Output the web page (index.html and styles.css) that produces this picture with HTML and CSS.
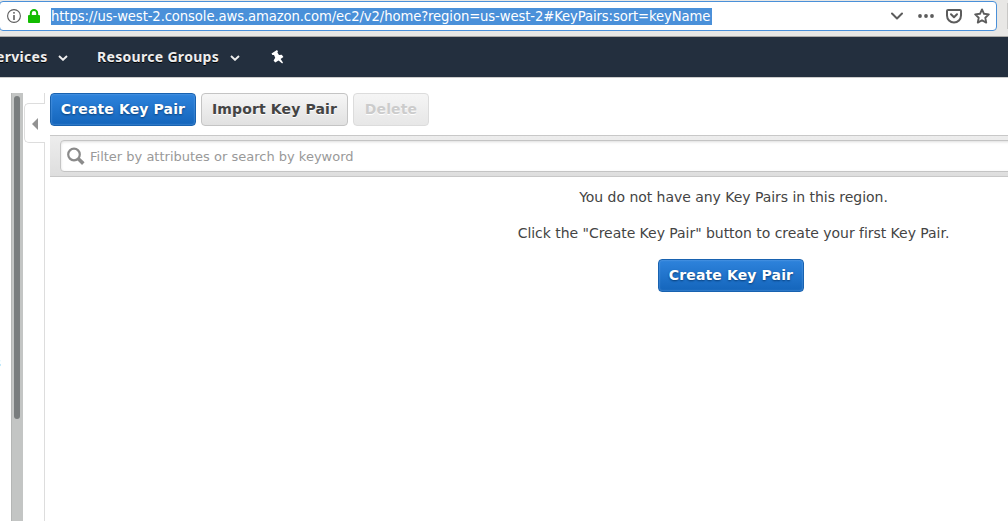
FILE: index.html
```
<!DOCTYPE html>
<html lang="en">
<head>
<meta charset="utf-8">
<title>EC2 Key Pairs</title>
<link rel="stylesheet" href="styles.css">
</head>
<body>
<header class="browser">
  <div class="address">
    <svg class="info" width="14" height="14" viewBox="0 0 14 14"><circle cx="7" cy="7" r="6.4" fill="none" stroke="#5c5c5c" stroke-width="1.1"/><rect x="6.1" y="3" width="1.8" height="1.8" rx=".7" fill="#5c5c5c"/><rect x="6.2" y="6" width="1.6" height="5" rx=".5" fill="#5c5c5c"/></svg>
    <svg class="lock" width="12" height="14" viewBox="0 0 12 14"><path d="M2.8 7V4.2a3.2 3.2 0 0 1 6.4 0V7" fill="none" stroke="#12bc00" stroke-width="2"/><rect x="0" y="6" width="12" height="8" rx="1" fill="#12bc00"/></svg>
    <span class="url">https://us-west-2.console.aws.amazon.com/ec2/v2/home?region=us-west-2#KeyPairs:sort=keyName</span>
    <div class="actions">
      <svg width="12" height="16" viewBox="0 0 12 16"><path d="M1 5.5 6 10.5 11 5.5" fill="none" stroke="#5c5c5c" stroke-width="2" stroke-linecap="round" stroke-linejoin="round"/></svg>
      <svg width="16" height="16" viewBox="0 0 16 16" fill="#5c5c5c"><circle cx="2" cy="8" r="1.9"/><circle cx="8" cy="8" r="1.9"/><circle cx="14" cy="8" r="1.9"/></svg>
      <svg width="16" height="16" viewBox="0 0 16 16" fill="none" stroke="#5c5c5c" stroke-width="2" stroke-linecap="round" stroke-linejoin="round"><path d="M2 2h12a1 1 0 0 1 1 1v4.5a7 7 0 0 1-14 0V3a1 1 0 0 1 1-1z"/><path d="M5 6.3 8 9.2l3-2.9"/></svg>
      <svg width="16" height="16" viewBox="0 0 16 16"><path d="M8 1.4 10 5.8l4.8.6-3.5 3.3.9 4.9L8 12.2l-4.2 2.4.9-4.9L1.2 6.4 6 5.8z" fill="none" stroke="#5c5c5c" stroke-width="1.9" stroke-linejoin="round"/></svg>
    </div>
  </div>
  <div class="search-edge"></div>
</header>
<nav class="topnav">
  <span class="label services">Services</span>
  <svg class="caret" width="10" height="6" viewBox="0 0 10 6"><path d="M1 1 5 4.8 9 1" fill="none" stroke="#eee" stroke-width="1.9"/></svg>
  <span class="label groups">Resource Groups</span>
  <svg class="caret" width="10" height="6" viewBox="0 0 10 6"><path d="M1 1 5 4.8 9 1" fill="none" stroke="#eee" stroke-width="1.9"/></svg>
  <svg class="pin" width="13" height="14" viewBox="0 0 13 14"><path d="M.5 3.5 6 .1 7 1.5 6.4 2.6 8 5 10.8 4.8 12.4 7 9.6 9 12 12.6 11.2 13.5 7.6 10.4 4.2 12.6 2.6 10.4 4.2 7.7 3 5.1 1.4 5z" fill="#fff"/></svg>
</nav>
<main class="console">
  <aside class="sidebar"><span class="clipped">s</span></aside>
  <div class="scrollbar"><div class="thumb"></div></div>
  <div class="divider">
    <div class="stub"></div>
    <div class="collapse"><svg width="6" height="12" viewBox="0 0 6 12"><path d="M6 0v12L0 6z" fill="#929292"/></svg></div>
    <div class="line"></div>
  </div>
  <section class="content">
    <div class="toolbar">
      <button class="btn primary">Create Key Pair</button>
      <button class="btn import">Import Key Pair</button>
      <button class="btn disabled">Delete</button>
    </div>
    <div class="filterbar">
      <div class="filter">
        <svg width="18" height="18" viewBox="0 0 18 18"><circle cx="7" cy="7.5" r="5.8" fill="none" stroke="#8b8b8b" stroke-width="2.2"/><path d="m11.3 11.8 5 4.8" stroke="#8b8b8b" stroke-width="3.6"/></svg>
        <span>Filter by attributes or search by keyword</span>
      </div>
    </div>
    <div class="empty">
      <p>You do not have any Key Pairs in this region.</p>
      <p>Click the "Create Key Pair" button to create your first Key Pair.</p>
      <button class="btn primary">Create Key Pair</button>
    </div>
  </section>
</main>
</body>
</html>
```
FILE: styles.css
```
* { box-sizing: border-box; }
body { margin: 0; width: 1008px; height: 521px; overflow: hidden; background: #fff; font-family: "DejaVu Sans", sans-serif; }
svg { display: block; flex: none; }
.browser { display: flex; height: 37px; padding-top: 1px; background: #e8e7e5; border-bottom: 1px solid #aaa9a7; }
.address { display: flex; align-items: center; width: 998px; height: 30px; margin-left: -1px; padding: 0 6px 0 7px; flex: none; background: #fff; border: 1px solid #4a90d9; border-radius: 4px; }
.info { margin-right: 7px; }
.lock { margin-right: 11px; }
.url { width: 661px; height: 17px; line-height: 16px; font-family: "DejaVu Sans Condensed", "DejaVu Sans", sans-serif; font-stretch: condensed; font-size: 14.67px; letter-spacing: -.1px; color: #fff; background: #4a90d9; white-space: nowrap; }
.actions { display: flex; align-items: center; margin-left: auto; }
.actions svg + svg { margin-left: 12px; }
.actions svg:nth-child(2) { margin-left: 15px; }
.search-edge { width: 2px; height: 26px; margin: 2px 0 0 10px; background: #c8c7c5; }
.topnav { display: flex; align-items: center; height: 40px; background: #232f3e; }
.label { color: #eee; font: bold 14px/20px "Noto Sans", sans-serif; letter-spacing: .31px; white-space: nowrap; text-shadow: 0 1px 0 #000; }
.services { width: 59px; margin-left: -12px; }
.caret { margin: 2px 0 0 11px; }
.groups { width: 122px; margin-left: 29px; }
.pin { margin: 0 0 0 31px; }
.console { display: flex; height: 444px; padding-top: 15px; border-top: 1px solid #ccc; }
.sidebar { width: 11px; flex: none; overflow: hidden; }
.clipped { display: block; margin: 261px 0 0 -6px; font-size: 13px; line-height: 18px; color: #666; }
.scrollbar { width: 12px; flex: none; padding: 3px 3px 0 2px; background: #c3c5c4; border-left: 1px solid #b4b6b5; }
.thumb { width: 6px; height: 323px; background: #797d7e; border-radius: 3px; }
.divider { display: flex; flex-direction: column; width: 22px; flex: none; padding-left: 1px; }
.stub { height: 10px; border-right: 1px solid #ddd; }
.collapse { height: 40px; padding: 14px 0 0 7px; border: 1px solid #ddd; border-right: 0; border-radius: 5px 0 0 5px; }
.line { flex: 1; border-right: 1px solid #ddd; }
.content { width: 1367px; margin-left: 5px; flex: none; }
.toolbar { display: flex; gap: 5px; height: 42px; }
.btn { width: 146px; height: 33px; padding: 0 0 2px; border: 1px solid #1862b0; border-radius: 4px; font: bold 14px/20px "DejaVu Sans", sans-serif; letter-spacing: .13px; white-space: nowrap; }
.primary { color: #fff; background: linear-gradient(#2e83dc, #1465bb); box-shadow: inset 0 0 2px #72aae6; text-shadow: 0 1px 2px #073c76; }
.import { width: 147px; color: #444; border-color: #c4c4c4; background: linear-gradient(#f6f6f6, #e1e1e1); text-shadow: 0 1px #fff; }
.disabled { width: 76px; color: #ccc; border-color: #dcdcdc; background: linear-gradient(#f5f5f5, #e7e7e7); text-shadow: 0 1px #fff; }
.filterbar { height: 42px; padding: 4px 0 0 10px; border: solid #c8c8c8; border-width: 1px 0; background: linear-gradient(#ededed, #dedede); }
.filter { display: flex; align-items: center; height: 32px; padding-left: 6px; border: 1px solid #c4c4c4; border-radius: 4px; background: #fff; box-shadow: inset 0 1px 3px #ddd; color: #999; font-size: 13px; }
.filter span { margin-left: 5px; }
.empty { display: flex; flex-direction: column; align-items: center; padding-top: 11px; color: #444; }
.empty p { margin: 0 0 18px; font-size: 14px; line-height: 18px; letter-spacing: -.04px; }
.empty .btn { margin: -1px 5px 0 0; }
```
